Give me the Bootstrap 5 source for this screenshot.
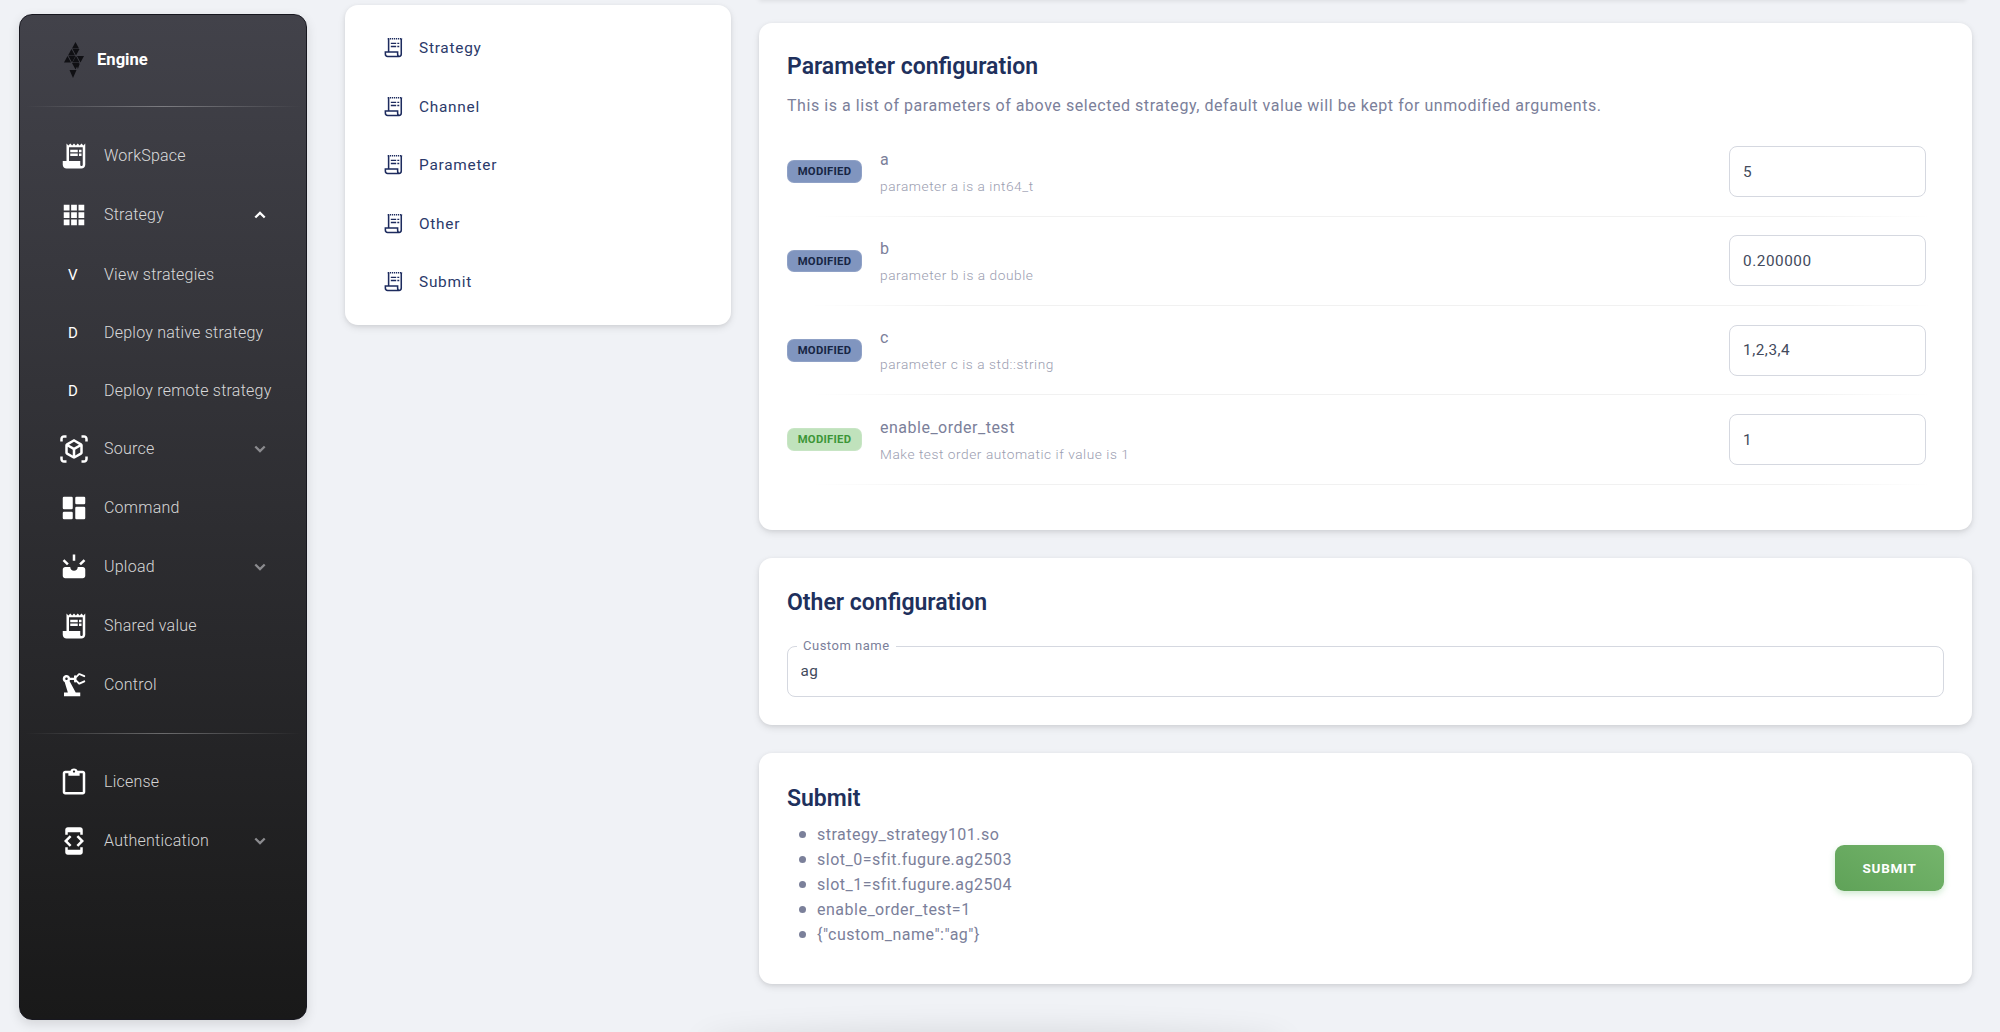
<!DOCTYPE html>
<html lang="en">
<head>
<meta charset="utf-8">
<title>Engine</title>
<link rel="stylesheet" href="https://cdn.jsdelivr.net/npm/bootstrap@5.3.0/dist/css/bootstrap.min.css">
<style>
html,body{height:1032px;overflow:hidden}
body{background:#f0f2f6;font-family:Roboto,"Liberation Sans",sans-serif;color:#7b809a}
.pg{height:1032px}
.side{width:288px;height:1006px;margin:14px 0 0 19px;flex:none;border:1px solid #17171f;border-radius:13px;background:linear-gradient(180deg,#42424a 0%,#191919 100%);box-shadow:0 4px 12px rgba(0,0,0,.12)}
.brand{height:91px;padding-left:44px;gap:13px;color:#fff;font-weight:700;font-size:16.6px}
.rule{height:1px;flex:none;margin:0 5px;background:linear-gradient(90deg,rgba(255,255,255,0),rgba(255,255,255,.32),rgba(255,255,255,0))}
.snav{margin-top:19px}
.snav2{margin-top:18.5px}
.snav3{margin-top:18.5px}
.sitem{height:59px;padding:0 36px 0 39px;gap:15px;color:rgba(255,255,255,.82);font-size:16px;font-weight:300;letter-spacing:.23px;white-space:nowrap}
.sitem:hover{color:#fff}
.sub-list{margin-top:1.75px}
.sub-list .sitem{height:58px;padding-right:0}
.ico{width:30px;height:30px;flex:none;fill:#fff}
.ltr{width:28px;margin-right:2px;flex:none;text-align:center;color:#fff;font-weight:400;font-size:15px}
.chev{width:20px;height:20px;margin-left:auto;flex:none;fill:#8b8b8f}
.chev-up{fill:#fff}
.toc{width:386px;height:320px;margin:5px 0 0 38px;flex:none;padding-top:14.6px;border:0;border-radius:13px;box-shadow:0 3px 8px -1px rgba(0,0,0,.12),0 1px 4px rgba(0,0,0,.06)}
.titem{height:58.5px;padding:0 0 0 37px;gap:14px;color:#2b3a6a;font-size:15.4px;letter-spacing:.75px}
.tico{width:23px;height:23px;margin-bottom:2px;flex:none;fill:none;stroke:#1d2b5e}
.maincol{width:1213px;margin-left:28px;flex:none;position:relative;padding-top:23px}
.prevshadow{position:absolute;top:-6px;left:0;right:6px;height:6px;box-shadow:0 1px 5px rgba(0,0,0,.09)}
.nextshadow{position:absolute;top:1048px;left:-45px;width:560px;height:10px;box-shadow:0 -6px 30px 12px rgba(0,0,0,.1);border-radius:50%}
.panel{border:0;border-radius:13px;padding:0 28px;box-shadow:0 3px 8px -1px rgba(0,0,0,.12),0 1px 4px rgba(0,0,0,.06)}
.p1{height:507px;padding-top:30.5px;margin-bottom:28px}
.p2{height:167px;padding-top:31.5px;margin-bottom:27.5px}
.p3{height:231.5px}
.ptitle{margin:0;font-family:Roboto,sans-serif;font-size:23px;line-height:26px;font-weight:600;color:#20305c}
.pdesc{margin:13px 0 0;font-size:16px;line-height:26px;letter-spacing:.55px;color:#7b809a}
.prow{height:88.33px;padding-right:18px;gap:18px}
.plist{margin-top:9px}
.tag{width:75px;height:22.5px;padding:0;flex:none;line-height:22.5px;font-size:11.3px;font-weight:700;letter-spacing:.25px;border-radius:7px;border:1px solid rgba(255,255,255,.12)}
.tag-blue{background:#8095bf;color:#172544}
.tag-green{background:#c0e2bc;color:#3d9638}
.ptxt{padding-top:2px}
.pname{font-size:16px;line-height:20px;letter-spacing:.5px;color:#7b809a}
.psub{font-size:13.7px;line-height:20px;margin-top:6px;letter-spacing:.55px;font-weight:300;color:#9a9db0}
.pfield{width:197px;height:51px;padding:0 13px;flex:none;color:#434a5c;font-size:15.3px;letter-spacing:.55px;border:1.3px solid #d5d8e0;border-radius:8px}
.hr-soft{margin:0;height:1px;border:0;opacity:1;background:linear-gradient(90deg,rgba(0,0,0,0) 2%,rgba(0,0,0,.055) 14%,rgba(0,0,0,.055) 88%,rgba(0,0,0,0) 99%)}
.wrapfield{margin-top:30px;position:relative}
.wfield{height:51px;padding:0 12.500px;color:#434a5c;font-size:15.3px;letter-spacing:.55px;border:1.3px solid #d5d8e0;border-radius:8px}
.wlabel{position:absolute;left:10px;top:-9px;background:#fff;padding:0 6px;font-size:13px;line-height:18px;letter-spacing:.5px;color:#7b809a}
.subtxt{padding-top:33px}
.plist-sub{margin:10px 0 0;padding-left:30px;list-style:none;font-size:16px;line-height:25px;letter-spacing:.5px;color:#7b809a}
.plist-sub li::before{content:"";display:inline-block;width:7px;height:7px;margin:0 11.500px 2px -18.500px;vertical-align:middle;border-radius:50%;background:#7b809a}
.btn-go{width:109px;height:46px;padding:0;flex:none;border:0;border-radius:9px;font-size:13.5px;font-weight:700;letter-spacing:.7px;color:#fff;background:linear-gradient(30deg,#5fa258,#75b56c);box-shadow:0 3px 6px rgba(102,187,106,.3)}
.btn-go:hover{color:#fff}
</style>
</head>
<body>
<svg width="0" height="0" class="position-absolute" aria-hidden="true">
  <symbol id="i-thin" viewBox="0 0 24 24"><path d="M6 2.900H21" stroke-width="1.700" stroke-dasharray="1.300 .8"/><path d="M6.900 2.500V16.200M20.100 2.500V18.800c0 1.500-1 2.500-2.300 2.500H5.900c-1.400 0-2.400-1-2.400-2.500v-2.100H16.300v2c0 1.500.8 2.600 1.900 2.600" stroke-width="1.600"/><path d="M9.200 7.700h5.600M16 7.700h2M9.200 11h5.600M16 11h2" stroke-width="1.500"/></symbol>
  <symbol id="i-receipt" viewBox="0 0 24 24"><path d="M19.500 3.500 18 2l-1.500 1.500L15 2l-1.500 1.500L12 2l-1.500 1.500L9 2 7.500 3.500 6 2v14H3v3c0 1.660 1.340 3 3 3h12c1.660 0 3-1.340 3-3V2l-1.500 1.500zM19 19c0 .55-.45 1-1 1s-1-.45-1-1v-3H8V5h11v14z"/><path d="M9 7h6v2H9zm7 0h2v2h-2zm-7 3h6v2H9zm7 0h2v2h-2z"/></symbol>
  <symbol id="i-apps" viewBox="0 0 24 24"><path d="M3.800 3.800h4.600v4.600H3.800zm5.900 0h4.600v4.600H9.700zm5.900 0h4.600v4.600h-4.600zM3.800 9.700h4.600v4.600H3.800zm5.900 0h4.600v4.600H9.700zm5.900 0h4.600v4.600h-4.600zM3.800 15.600h4.600v4.600H3.800zm5.900 0h4.600v4.600H9.700zm5.900 0h4.600v4.600h-4.600z"/></symbol>
  <symbol id="i-ar" viewBox="0 0 24 24"><path d="M3 4c0-.55.45-1 1-1h2V1H4C2.340 1 1 2.340 1 4v2h2V4zm0 16v-2H1v2c0 1.660 1.340 3 3 3h2v-2H4c-.55 0-1-.45-1-1zM20 1h-2v2h2c.55 0 1 .45 1 1v2h2V4c0-1.660-1.340-3-3-3zm1 19c0 .55-.45 1-1 1h-2v2h2c1.660 0 3-1.340 3-3v-2h-2v2zm-2-5.130V9.130c0-.72-.38-1.380-1-1.730l-5-2.880c-.31-.18-.65-.27-1-.27s-.69.09-1 .27L6 7.390c-.62.36-1 1.020-1 1.740v5.740c0 .72.38 1.380 1 1.730l5 2.880c.31.18.65.27 1 .27s.69-.09 1-.27l5-2.880c.62-.35 1-1.010 1-1.730zm-8 2.300-4-2.300v-4.630l4 2.330v4.600zm1-6.330L8.040 8.530 12 6.250l3.960 2.280L12 10.840zm5 4.030-4 2.300v-4.600l4-2.330v4.630z"/></symbol>
  <symbol id="i-dash" viewBox="0 0 24 24"><rect x="3" y="3" width="8" height="10" rx="1"/><rect x="3" y="15" width="8" height="6" rx="1"/><rect x="13" y="11" width="8" height="10" rx="1"/><rect x="13" y="3" width="8" height="6" rx="1"/></symbol>
  <symbol id="i-up" viewBox="0 0 24 24"><path d="M21.100 7.100 19.700 5.700l-3.560 3.550 1.410 1.410L21.100 7.100zM13 2h-2v5h2V2zm-6.600 8.650 1.410-1.410L4.300 5.700 2.900 7.100l3.500 3.550zM19 12h-4c0 1.660-1.350 3-3 3s-3-1.340-3-3H5c-1.100 0-2 .9-2 2v5c0 1.100.9 2 2 2h14c1.100 0 2-.9 2-2v-5c0-1.100-.9-2-2-2z"/></symbol>
  <symbol id="i-robot" viewBox="0 0 24 24"><path d="M19.930 8.350l-3.600 1.680L14 7.700V6.300l2.330-2.330 3.600 1.680c.38.18.82.01 1-.36.18-.38.01-.82-.36-1L16.650 2.600c-.38-.18-.83-.1-1.130.2l-1.740 1.740c-.18-.24-.46-.4-.78-.4-.55 0-1 .45-1 1v1H8.820C8.340 4.650 6.980 3.730 5.400 4.070c-1.160.25-2.150 1.250-2.360 2.430-.22 1.320.46 2.470 1.480 3.080L7.080 18H4v3h13v-3h-3.620L8.410 8.770c.17-.24.31-.49.41-.77H12v1c0 .55.45 1 1 1 .32 0 .6-.16.78-.4l1.740 1.740c.3.3.75.38 1.130.2l3.920-1.830c.38-.18.54-.62.36-1-.18-.37-.62-.54-1-.36zM6 8c-.55 0-1-.45-1-1s.45-1 1-1 1 .45 1 1-.45 1-1 1z"/></symbol>
  <symbol id="i-paste" viewBox="0 0 24 24"><path d="M19 3h-4.200C14.400 1.900 13.300 1.200 12 1.200S9.600 1.900 9.200 3H5C3.900 3 3 3.900 3 5v15c0 1.100.9 2 2 2h14c1.100 0 2-.9 2-2V5c0-1.100-.9-2-2-2zm-7-.3c.5 0 .9.4.9.9s-.4.9-.9.9-.9-.4-.9-.9.4-.9.9-.9zM19 20H5V5h2.500v2h9V5H19v15z"/></symbol>
  <symbol id="i-dev" viewBox="0 0 24 24"><path d="M7 5h10v2h2V3c0-1.100-.9-1.990-2-1.990L7 1c-1.100 0-2 .9-2 2v4h2V5zm8.410 11.590L20 12l-4.590-4.590L14 8.830 17.170 12 14 15.170l1.410 1.420zM10 15.170 6.830 12 10 8.830 8.590 7.410 4 12l4.590 4.590L10 15.170zM17 19H7v-2H5v4c0 1.100.9 2 2 2h10c1.100 0 2-.9 2-2v-4h-2v2z"/></symbol>
  <symbol id="i-less" viewBox="0 0 24 24"><path d="M12 7.500l-6.600 6.600 1.900 1.900 4.700-4.700 4.700 4.700 1.900-1.900z"/></symbol>
  <symbol id="i-more" viewBox="0 0 24 24"><path d="M12 16.500l-6.600-6.600 1.900-1.900 4.700 4.700 4.700-4.700 1.900 1.900z"/></symbol>
</svg>

<div class="pg d-flex align-items-start">
  <aside class="side d-flex flex-column">
    <div class="brand d-flex align-items-center">
      <svg width="20" height="37" viewBox="0 0 20 37" fill="#101014" aria-hidden="true"><path d="M11.500 0 8 6.500h7zM7.500 7 4 13.500h7zM8.500 7h7L12 13.500zM3.500 14 0 20.500h7zM4.500 14h7L8 20.500zM12 14l-3.500 6.500h7zM13 14h7l-3.500 6.500zM8 21h7l-3.500 6.500zM12 21.500h3.800l-1.900 5.500zM5.500 28h7L9 36z"/></svg>
      <span>Engine</span>
    </div>
    <div class="rule"></div>
    <ul class="nav flex-column snav">
      <li class="nav-item"><a class="nav-link sitem d-flex align-items-center" href="#"><svg class="ico"><use href="#i-receipt"/></svg>WorkSpace</a></li>
      <li class="nav-item"><a class="nav-link sitem d-flex align-items-center" href="#"><svg class="ico"><use href="#i-apps"/></svg>Strategy<svg class="chev chev-up"><use href="#i-less"/></svg></a>
        <ul class="nav flex-column sub-list">
          <li class="nav-item"><a class="nav-link sitem d-flex align-items-center" href="#"><span class="ltr">V</span>View strategies</a></li>
          <li class="nav-item"><a class="nav-link sitem d-flex align-items-center" href="#"><span class="ltr">D</span>Deploy native strategy</a></li>
          <li class="nav-item"><a class="nav-link sitem d-flex align-items-center" href="#"><span class="ltr">D</span>Deploy remote strategy</a></li>
        </ul>
      </li>
      <li class="nav-item"><a class="nav-link sitem d-flex align-items-center" href="#"><svg class="ico"><use href="#i-ar"/></svg>Source<svg class="chev"><use href="#i-more"/></svg></a></li>
      <li class="nav-item"><a class="nav-link sitem d-flex align-items-center" href="#"><svg class="ico"><use href="#i-dash"/></svg>Command</a></li>
      <li class="nav-item"><a class="nav-link sitem d-flex align-items-center" href="#"><svg class="ico"><use href="#i-up"/></svg>Upload<svg class="chev"><use href="#i-more"/></svg></a></li>
      <li class="nav-item"><a class="nav-link sitem d-flex align-items-center" href="#"><svg class="ico"><use href="#i-receipt"/></svg>Shared value</a></li>
      <li class="nav-item"><a class="nav-link sitem d-flex align-items-center" href="#"><svg class="ico"><use href="#i-robot"/></svg>Control</a></li>
    </ul>
    <div class="rule snav2"></div>
    <ul class="nav flex-column snav3">
      <li class="nav-item"><a class="nav-link sitem d-flex align-items-center" href="#"><svg class="ico"><use href="#i-paste"/></svg>License</a></li>
      <li class="nav-item"><a class="nav-link sitem d-flex align-items-center" href="#"><svg class="ico"><use href="#i-dev"/></svg>Authentication<svg class="chev"><use href="#i-more"/></svg></a></li>
    </ul>
  </aside>

  <nav class="card toc">
    <ul class="nav flex-column">
      <li class="nav-item"><a class="nav-link titem d-flex align-items-center" href="#"><svg class="tico"><use href="#i-thin"/></svg>Strategy</a></li>
      <li class="nav-item"><a class="nav-link titem d-flex align-items-center" href="#"><svg class="tico"><use href="#i-thin"/></svg>Channel</a></li>
      <li class="nav-item"><a class="nav-link titem d-flex align-items-center" href="#"><svg class="tico"><use href="#i-thin"/></svg>Parameter</a></li>
      <li class="nav-item"><a class="nav-link titem d-flex align-items-center" href="#"><svg class="tico"><use href="#i-thin"/></svg>Other</a></li>
      <li class="nav-item"><a class="nav-link titem d-flex align-items-center" href="#"><svg class="tico"><use href="#i-thin"/></svg>Submit</a></li>
    </ul>
  </nav>

  <main class="maincol">
    <div class="prevshadow"></div>
    <section class="card panel p1">
      <h5 class="ptitle">Parameter configuration</h5>
      <p class="pdesc">This is a list of parameters of above selected strategy, default value will be kept for unmodified arguments.</p>
      <div class="plist">
        <div class="prow d-flex align-items-center">
          <span class="badge tag tag-blue">MODIFIED</span>
          <div class="flex-grow-1 ptxt"><div class="pname">a</div><div class="psub">parameter a is a int64_t</div></div>
          <input class="form-control pfield" value="5">
        </div>
        <hr class="hr-soft">
        <div class="prow d-flex align-items-center">
          <span class="badge tag tag-blue">MODIFIED</span>
          <div class="flex-grow-1 ptxt"><div class="pname">b</div><div class="psub">parameter b is a double</div></div>
          <input class="form-control pfield" value="0.200000">
        </div>
        <hr class="hr-soft">
        <div class="prow d-flex align-items-center">
          <span class="badge tag tag-blue">MODIFIED</span>
          <div class="flex-grow-1 ptxt"><div class="pname">c</div><div class="psub">parameter c is a std::string</div></div>
          <input class="form-control pfield" value="1,2,3,4">
        </div>
        <hr class="hr-soft">
        <div class="prow d-flex align-items-center">
          <span class="badge tag tag-green">MODIFIED</span>
          <div class="flex-grow-1 ptxt"><div class="pname">enable_order_test</div><div class="psub">Make test order automatic if value is 1</div></div>
          <input class="form-control pfield" value="1">
        </div>
        <hr class="hr-soft">
      </div>
    </section>
    <section class="card panel p2">
      <h5 class="ptitle">Other configuration</h5>
      <div class="wrapfield">
        <input class="form-control wfield" value="ag">
        <label class="wlabel">Custom name</label>
      </div>
    </section>
    <section class="card panel p3 d-flex flex-row align-items-center justify-content-between">
      <div class="subtxt align-self-start">
        <h5 class="ptitle">Submit</h5>
        <ul class="plist-sub">
          <li>strategy_strategy101.so</li>
          <li>slot_0=sfit.fugure.ag2503</li>
          <li>slot_1=sfit.fugure.ag2504</li>
          <li>enable_order_test=1</li>
          <li>{"custom_name":"ag"}</li>
        </ul>
      </div>
      <button class="btn btn-go" type="button">SUBMIT</button>
    </section>
    <div class="nextshadow"></div>
  </main>
</div>
<script src="https://cdn.jsdelivr.net/npm/bootstrap@5.3.0/dist/js/bootstrap.bundle.min.js"></script>
</body>
</html>
